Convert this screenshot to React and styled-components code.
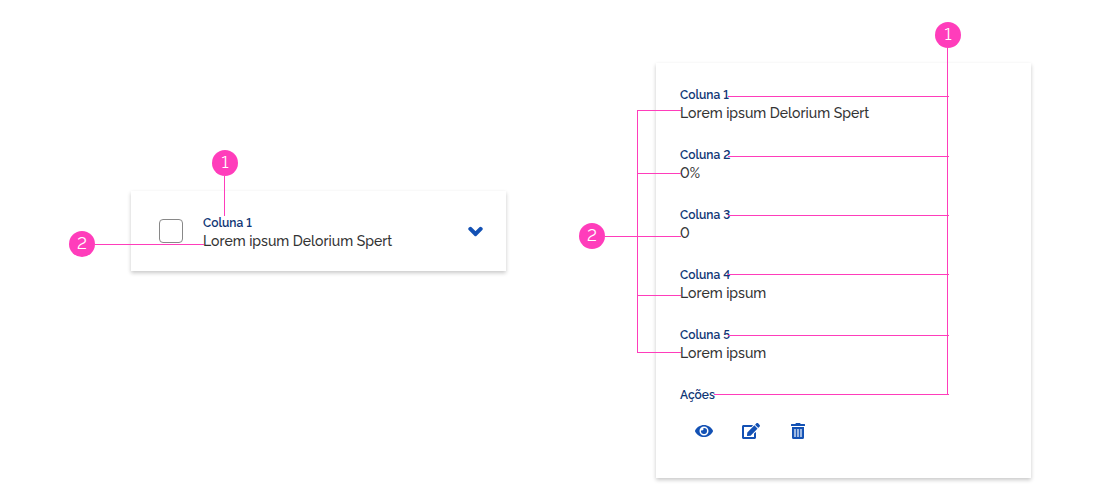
import React from "react";
import styled, { createGlobalStyle } from "styled-components";
import { FaChevronDown, FaEye, FaEdit } from "react-icons/fa";

const pink = "#ff3dbb";
const blue = "#1351b4";

const GlobalStyle = createGlobalStyle`
  * { box-sizing: border-box; }
  body {
    margin: 0;
    background: #fff;
    color: #333;
    font-family: Raleway, Lato, sans-serif;
    font-variant-numeric: lining-nums;
  }
`;

const Page = styled.main`
  display: grid;
  grid-template-columns: 1fr 1fr;
  align-items: start;
  gap: 150px;
  min-height: 100vh;
  padding: 63px 69px 22px 131px;
`;

const Card = styled.section`
  position: relative;
  background: #fff;
  box-shadow: 0 2px 4px rgba(0, 0, 0, 0.22);
`;

const CollapsedCard = styled(Card)`
  display: flex;
  align-items: flex-start;
  gap: 20px;
  margin-top: 128px;
  padding: 23px 23px 21px 28px;
`;

const ExpandedCard = styled(Card)`
  padding: 23px 24px 27px;
`;

const Checkbox = styled.input`
  appearance: none;
  width: 24px;
  height: 24px;
  margin: 5px 0;
  border: 1px solid #888;
  border-radius: 4px;
  background: #fff;
`;

const IconButton = styled.button`
  display: flex;
  align-items: center;
  justify-content: center;
  width: ${(p) => p.$width}px;
  height: ${(p) => p.$height}px;
  padding: 0;
  border: 0;
  background: transparent;
  color: ${blue};
  cursor: pointer;
`;

const Chevron = styled(FaChevronDown)`
  overflow: visible;
  stroke: currentColor;
  stroke-width: 60px;
  stroke-linejoin: round;
`;

const Fields = styled.dl`
  display: flex;
  flex: 1;
  flex-direction: column;
  gap: 24px;
  margin: 0;
`;

const FieldLabel = styled.dt`
  font-size: 12px;
  font-weight: 600;
  line-height: 18px;
  color: #0f3675;
`;

const FieldValue = styled.dd`
  margin: 0;
  font-size: 14px;
  font-weight: 500;
  line-height: 18px;
`;

const Actions = styled.dd`
  display: flex;
  gap: 7px;
  margin: 0;
  padding: 7px 4px 0;
`;

const Badge = styled.span`
  position: absolute;
  top: ${(p) => p.$top}px;
  left: ${(p) => (p.$left === undefined ? "auto" : `${p.$left}px`)};
  right: ${(p) => (p.$right === undefined ? "auto" : `${p.$right}px`)};
  width: 26px;
  height: 26px;
  border-radius: 50%;
  background: ${pink};
  color: #fff;
  font-size: 17px;
  font-weight: 400;
  line-height: 24px;
  text-align: center;
`;

const HLine = styled.span`
  position: absolute;
  top: ${(p) => p.$top}px;
  left: ${(p) => p.$left}px;
  right: ${(p) => (p.$right === undefined ? "auto" : `${p.$right}px`)};
  width: ${(p) => (p.$width === undefined ? "auto" : `${p.$width}px`)};
  height: 1px;
  background: ${pink};
`;

const VLine = styled.span`
  position: absolute;
  top: ${(p) => p.$top}px;
  left: ${(p) => (p.$left === undefined ? "auto" : `${p.$left}px`)};
  right: ${(p) => (p.$right === undefined ? "auto" : `${p.$right}px`)};
  width: 1px;
  height: ${(p) => p.$height}px;
  background: ${pink};
`;

function TrashIcon() {
  return (
    <svg width="14" height="16" viewBox="0 0 448 512" aria-hidden="true">
      <path
        fill="currentColor"
        d="M32 464a48 48 0 0 0 48 48h288a48 48 0 0 0 48-48V128H32zM432 32H312l-9.4-18.7A24 24 0 0 0 281.1 0H166.8a23.72 23.72 0 0 0-21.4 13.3L136 32H16A16 16 0 0 0 0 48v32a16 16 0 0 0 16 16h416a16 16 0 0 0 16-16V48a16 16 0 0 0-16-16z"
      />
      <path
        fill="#9db8e2"
        d="M94 192h68v256H94zM190 192h68v256h-68zM286 192h68v256h-68z"
      />
    </svg>
  );
}

function Field({ label, value }) {
  return (
    <div>
      <FieldLabel>{label}</FieldLabel>
      <FieldValue>{value}</FieldValue>
    </div>
  );
}

const rows = [
  ["Coluna 1", "Lorem ipsum Delorium Spert"],
  ["Coluna 2", "0%"],
  ["Coluna 3", "0"],
  ["Coluna 4", "Lorem ipsum"],
  ["Coluna 5", "Lorem ipsum"],
];

const labelLeaders = [33, 93, 152, 211, 272];
const valueLeaders = [47, 110, 173, 232, 289];

export default function App() {
  return (
    <>
      <GlobalStyle />
      <Page>
        <CollapsedCard>
          <Checkbox type="checkbox" aria-label="Selecionar linha" />
          <Fields>
            <Field label="Coluna 1" value="Lorem ipsum Delorium Spert" />
          </Fields>
          <IconButton $width={16} $height={34} aria-label="Expandir">
            <Chevron size={15} />
          </IconButton>

          <VLine $top={-15} $left={93} $height={40} />
          <HLine $top={53} $left={-36} $width={109} />
          <Badge $top={-41} $left={81}>1</Badge>
          <Badge $top={40} $left={-62}>2</Badge>
        </CollapsedCard>

        <ExpandedCard>
          <Fields>
            {rows.map(([label, value]) => (
              <Field key={label} label={label} value={value} />
            ))}
            <div>
              <FieldLabel>Ações</FieldLabel>
              <Actions>
                <IconButton $width={40} $height={40} aria-label="Visualizar">
                  <FaEye size={18} />
                </IconButton>
                <IconButton $width={40} $height={40} aria-label="Editar">
                  <FaEdit size={18} />
                </IconButton>
                <IconButton $width={40} $height={40} aria-label="Excluir">
                  <TrashIcon />
                </IconButton>
              </Actions>
            </div>
          </Fields>

          <VLine $top={-15} $right={83} $height={347} />
          {labelLeaders.map((top) => (
            <HLine key={top} $top={top} $left={72} $right={82} />
          ))}
          <HLine $top={331} $left={58} $right={82} />
          <VLine $top={47} $left={-19} $height={243} />
          {valueLeaders.map((top) => (
            <HLine key={top} $top={top} $left={-19} $width={44} />
          ))}
          <HLine $top={173} $left={-51} $width={32} />
          <Badge $top={-41} $right={70}>1</Badge>
          <Badge $top={160} $left={-77}>2</Badge>
        </ExpandedCard>
      </Page>
    </>
  );
}
